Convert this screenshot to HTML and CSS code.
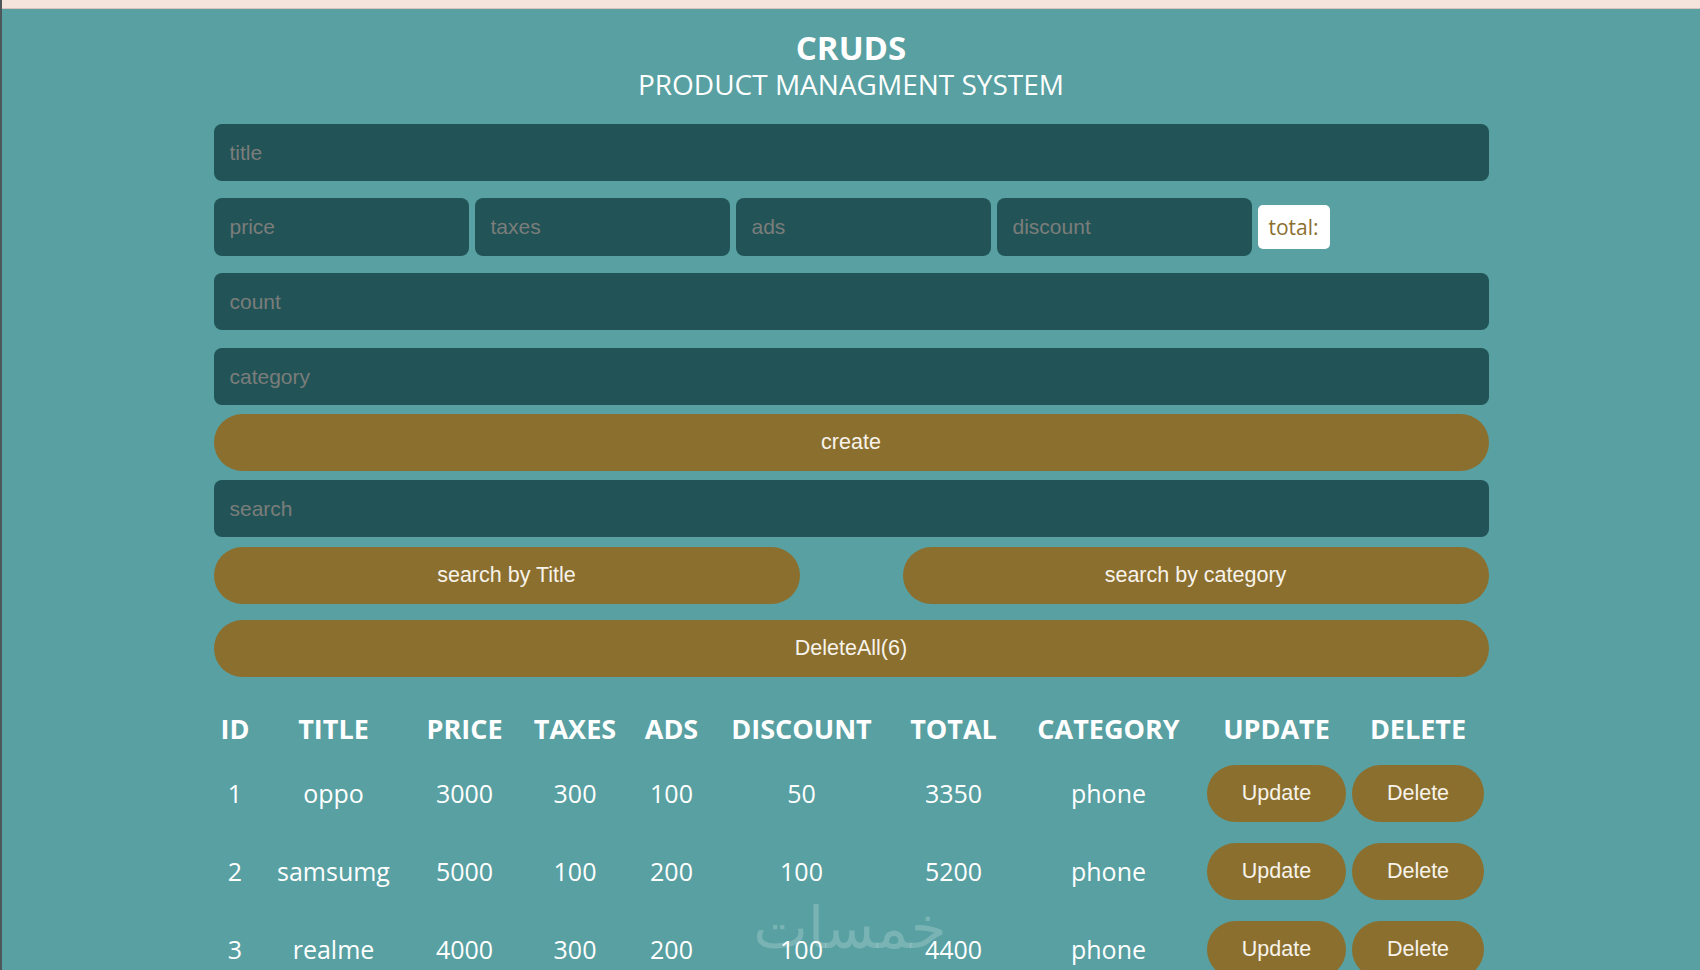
FILE: index.html
```html
<!DOCTYPE html>
<html>
<head>
  <meta charset='UTF-8'>
  <title>CRUDS</title>
  <link rel="stylesheet" href="styles.css">
</head>
<body>
  <div class='barra-topo'></div>
  <div class='crud'>
    <div class='cabecalho'>
      <h2>CRUDS</h2>
      <p>PRODUCT MANAGMENT SYSTEM</p>
    </div>
    <div class='entradas'>
      <input type='text' id='title' placeholder='title'>
      <div class='precos'>
        <input type='number' id='price' placeholder='price'>
        <input type='number' id='taxes' placeholder='taxes'>
        <input type='number' id='ads' placeholder='ads'>
        <input type='number' id='discount' placeholder='discount'>
        <small id='total'>total:</small>
      </div>
      <input type='number' id='count' placeholder='count' class='campo-count'>
      <input type='text' id='category' placeholder='category' class='campo-category'>
      <button id='submit' class='botao botao-create'>create</button>
    </div>
    <div class='busca'>
      <input type='text' id='search' placeholder='search'>
      <div class='botoes-busca'>
        <button class='botao'>search by Title</button>
        <button class='botao'>search by category</button>
      </div>
    </div>
    <div id='deleteAll'>
      <button class='botao'>DeleteAll(6)</button>
    </div>
    <table>
      <tr>
        <th class='c-id'>ID</th>
        <th class='c-title'>TITLE</th>
        <th class='c-price'>PRICE</th>
        <th class='c-taxes'>TAXES</th>
        <th class='c-ads'>ADS</th>
        <th class='c-discount'>DISCOUNT</th>
        <th class='c-total'>TOTAL</th>
        <th class='c-category'>CATEGORY</th>
        <th class='c-update'>UPDATE</th>
        <th class='c-delete'>DELETE</th>
      </tr>
      <tbody id='tbody'>
        <tr>
          <td>1</td><td>oppo</td><td>3000</td><td>300</td><td>100</td><td>50</td><td>3350</td><td>phone</td>
          <td><button class='botao-linha'>Update</button></td>
          <td><button class='botao-linha'>Delete</button></td>
        </tr>
        <tr>
          <td>2</td><td>samsumg</td><td>5000</td><td>100</td><td>200</td><td>100</td><td>5200</td><td>phone</td>
          <td><button class='botao-linha'>Update</button></td>
          <td><button class='botao-linha'>Delete</button></td>
        </tr>
        <tr>
          <td>3</td><td>realme</td><td>4000</td><td>300</td><td>200</td><td>100</td><td>4400</td><td>phone</td>
          <td><button class='botao-linha'>Update</button></td>
          <td><button class='botao-linha'>Delete</button></td>
        </tr>
      </tbody>
    </table>
  </div>
  <div class='marca'>خمسات</div>
</body>
</html>
```

FILE: styles.css
```css
* { box-sizing: border-box; }
body { margin: 0; min-height: 100vh; background: #58a0a2; border-left: 2px solid #4d5759; font-family: "Open Sans", sans-serif; color: #fff; overflow: hidden; }
.barra-topo { height: 9px; background: #f4e4db; border-bottom: 1px solid #d8c4bc; }
.crud { width: 1275px; margin: 0 auto; }
.cabecalho { text-align: center; padding-top: 21px; }
.cabecalho h2 { margin: 0; font-size: 33px; line-height: 36px; font-weight: 700; }
.cabecalho p { margin: 0; font-size: 28px; line-height: 36px; }
input { display: block; width: 100%; height: 57px; border: none; outline: none; border-radius: 8px; background: #225457; padding: 0 16px; font-family: "Liberation Sans", Arial, sans-serif; font-size: 21px; color: #ddd; }
input::placeholder { color: #7b7d7b; }
input::-webkit-outer-spin-button, input::-webkit-inner-spin-button { -webkit-appearance: none; margin: 0; }
#title { margin-top: 22px; }
.precos { display: flex; align-items: center; gap: 6px; margin-top: 17px; }
.precos input { width: 255px; height: 58px; }
#total { display: inline-block; background: #fff; color: #8b6f2f; font-size: 21px; padding: 0 11px; height: 44px; line-height: 44px; border-radius: 5px; }
.campo-count { margin-top: 17px; }
.campo-category { margin-top: 18px; }
.botao { display: block; width: 100%; height: 57px; border: none; border-radius: 30px; background: #8b6f2f; color: #f7f3ea; font-family: "Liberation Sans", Arial, sans-serif; font-size: 21.5px; cursor: pointer; }
.botao-create { margin-top: 9px; }
#search { margin-top: 9px; }
.botoes-busca { display: flex; justify-content: space-between; margin-top: 10px; }
.botoes-busca .botao { width: 586px; }
#deleteAll { margin-top: 16px; }
table { border-collapse: collapse; table-layout: fixed; width: 1271px; margin-top: 25px; text-align: center; }
th { height: 52px; padding: 0; font-size: 27px; font-weight: 700; }
td { height: 78px; padding: 0; font-size: 25px; }
.c-id { width: 43px; }
.c-title { width: 154px; }
.c-price { width: 108px; }
.c-taxes { width: 113px; }
.c-ads { width: 80px; }
.c-discount { width: 180px; }
.c-total { width: 124px; }
.c-category { width: 186px; }
.c-update { width: 150px; }
.c-delete { width: 133px; }
.botao-linha { height: 57px; padding: 0 35px; border: none; border-radius: 30px; background: #8b6f2f; color: #f7f3ea; font-family: "Liberation Sans", Arial, sans-serif; font-size: 21.5px; cursor: pointer; }
.marca { position: absolute; left: 0; right: 0; top: 893px; text-align: center; font-family: "DejaVu Sans", sans-serif; font-size: 58px; line-height: 70px; color: rgba(255, 255, 255, 0.2); pointer-events: none; }
```
